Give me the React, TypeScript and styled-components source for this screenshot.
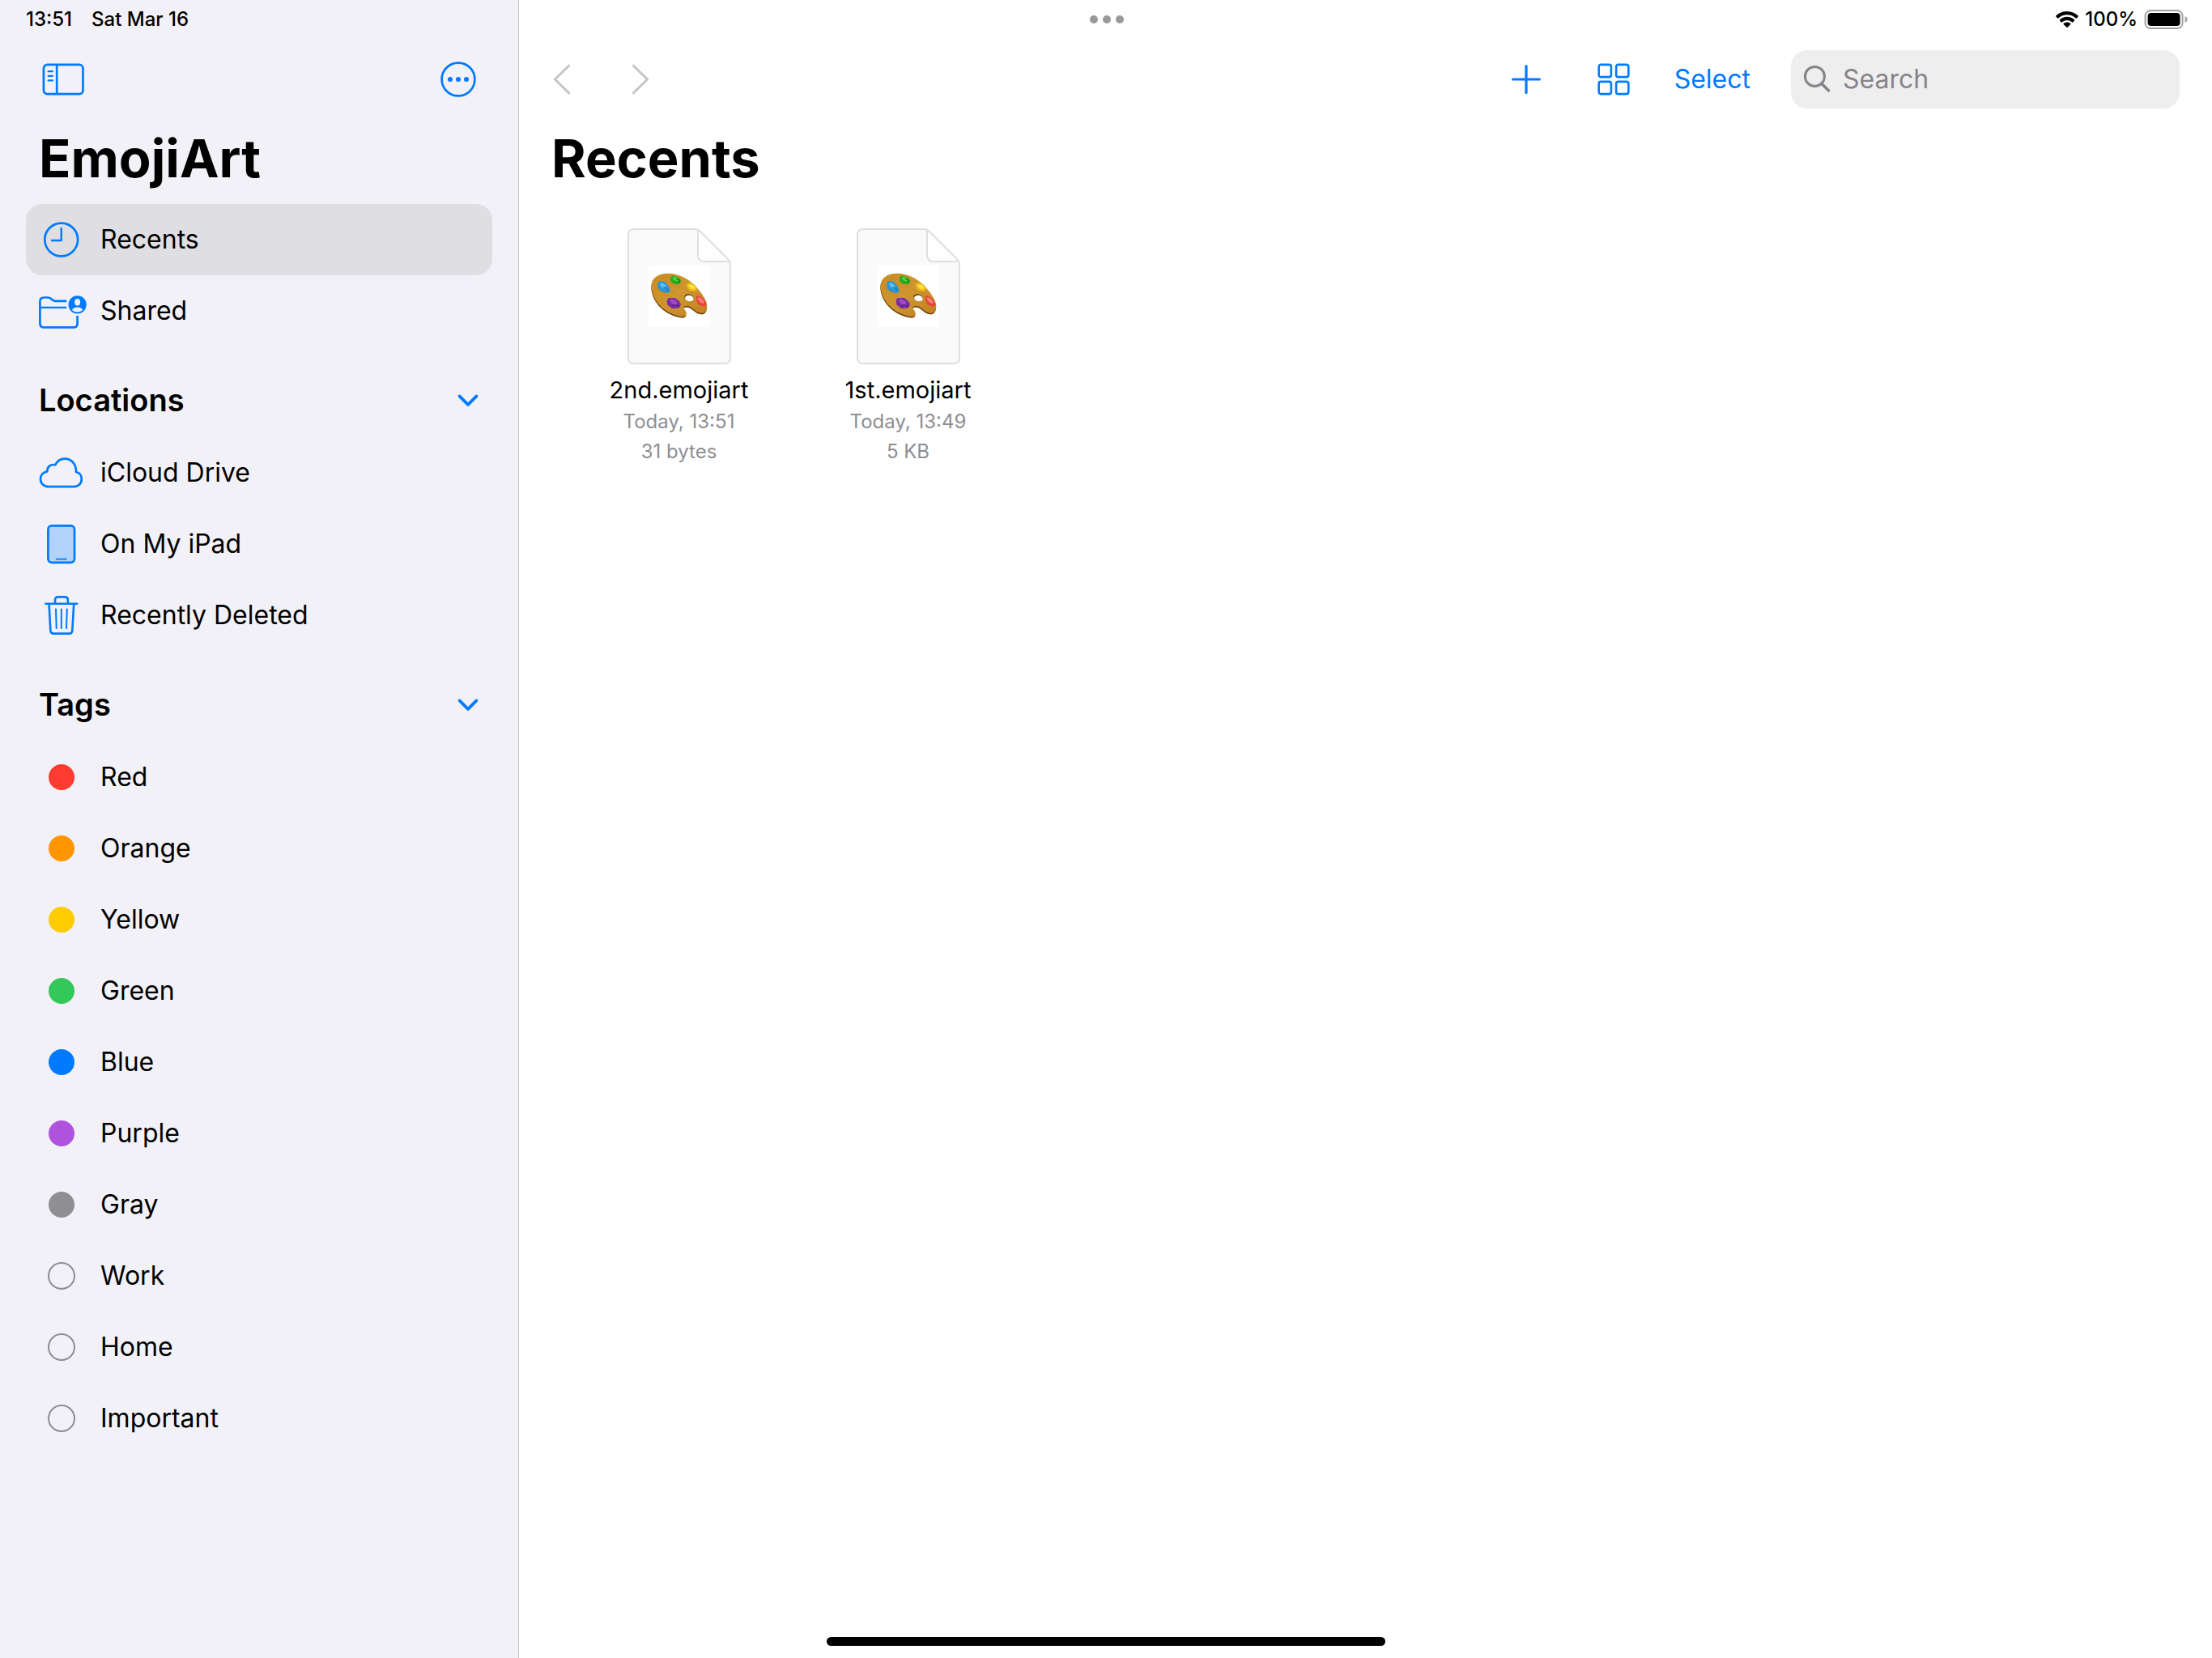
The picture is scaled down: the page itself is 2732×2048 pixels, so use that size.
import React from 'react';
import styled, { createGlobalStyle } from 'styled-components';

const blue = '#007aff';
const gray = '#8e8e93';

const GlobalStyle = createGlobalStyle`
  *, *::before, *::after { box-sizing: border-box; }
  body {
    margin: 0;
    background: #ffffff;
    color: #000000;
    font-family: Inter, "Liberation Sans", sans-serif;
  }
`;

const Screen = styled.div`
  position: relative;
  display: flex;
  min-height: 100vh;
`;

const StatusBar = styled.header`
  position: absolute;
  top: 0;
  left: 0;
  right: 0;
  display: grid;
  grid-template-columns: 1fr auto 1fr;
  align-items: center;
  height: 48px;
  padding: 0 30px 0 32px;
  font-size: 24px;
  font-weight: 500;
  line-height: 28px;
`;

const StatusGroup = styled.div<{ $end?: boolean; $gap: number }>`
  display: flex;
  align-items: center;
  justify-content: ${(p) => (p.$end ? 'flex-end' : 'flex-start')};
  gap: ${(p) => p.$gap}px;
`;

const MultitaskButton = styled.button`
  display: flex;
  gap: 6px;
  padding: 0;
  border: 0;
  background: none;
`;

const MultitaskDot = styled.span`
  width: 10px;
  height: 10px;
  border-radius: 50%;
  background: #999999;
`;

const Sidebar = styled.aside`
  flex: 0 0 641px;
  padding: 62px 32px 0;
  background: #f2f1f7;
  border-right: 1px solid #c3c3c7;
`;

const Content = styled.main`
  flex: 1;
  min-width: 0;
  padding: 62px 40px 0;
`;

const Bar = styled.div<{ $inset?: boolean }>`
  display: flex;
  align-items: center;
  height: 72px;
  padding: ${(p) => (p.$inset ? '0 20px' : '0')};
`;

const Spacer = styled.div`
  flex: 1;
`;

const IconButton = styled.button<{ $color?: string; $wide?: boolean }>`
  display: flex;
  align-items: center;
  justify-content: center;
  width: ${(p) => (p.$wide ? '66px' : 'auto')};
  padding: 0;
  border: 0;
  background: none;
  color: ${(p) => p.$color ?? blue};
`;

const Title = styled.h1<{ $indent: number }>`
  margin: 18px 0 12px;
  padding-left: ${(p) => p.$indent}px;
  font-size: 65px;
  font-weight: 700;
  line-height: 88px;
`;

const List = styled.ul`
  margin: 0;
  padding: 0;
  list-style: none;
`;

const RowLink = styled.a<{ $selected?: boolean }>`
  display: flex;
  align-items: center;
  gap: 20px;
  height: 88px;
  padding: 0 16px;
  border-radius: 20px;
  background: ${(p) => (p.$selected ? '#dfdee3' : 'transparent')};
  color: inherit;
  font-size: 32px;
  line-height: 44px;
  text-decoration: none;
`;

const IconSlot = styled.span`
  display: flex;
  align-items: center;
  justify-content: center;
  flex: 0 0 56px;
  height: 56px;
  color: ${blue};

  svg { overflow: visible; }
`;

const TagDot = styled.span<{ $color?: string }>`
  width: ${(p) => (p.$color ? 32 : 34)}px;
  height: ${(p) => (p.$color ? 32 : 34)}px;
  border: ${(p) => (p.$color ? 'none' : `2px solid ${gray}`)};
  border-radius: 50%;
  background: ${(p) => p.$color ?? 'transparent'};
`;

const SectionHeader = styled.div`
  display: flex;
  align-items: center;
  justify-content: space-between;
  height: 112px;
  padding: 20px 16px 0;
`;

const SectionTitle = styled.h2`
  margin: 0;
  font-size: 38px;
  font-weight: 600;
  line-height: 48px;
`;

const Actions = styled.div`
  display: flex;
  align-items: center;
  gap: 42px;
`;

const SelectButton = styled.button`
  padding: 0;
  border: 0;
  background: none;
  color: ${blue};
  font: inherit;
  font-size: 32px;
  line-height: 44px;
`;

const SearchField = styled.label`
  display: flex;
  align-items: center;
  gap: 14px;
  width: 480px;
  height: 72px;
  padding: 0 14px;
  border-radius: 20px;
  background: #eeeeef;
  color: #858589;
`;

const SearchInput = styled.input`
  flex: 1;
  min-width: 0;
  padding: 0;
  border: 0;
  outline: 0;
  background: none;
  color: #000000;
  font: inherit;
  font-size: 32px;
  line-height: 44px;

  &::placeholder { color: #858589; opacity: 1; }
`;

const FileGrid = styled.ul`
  display: grid;
  grid-template-columns: repeat(auto-fill, 283px);
  margin: 0;
  padding: 30px 0 0 16px;
  list-style: none;
`;

const FileCard = styled.li`
  display: flex;
  flex-direction: column;
  align-items: center;
`;

const FileName = styled.span`
  margin-top: 12px;
  font-size: 29px;
  line-height: 40px;
`;

const FileMeta = styled.span`
  color: ${gray};
  font-size: 24px;
  line-height: 37px;
`;

const HomeIndicator = styled.div`
  position: absolute;
  bottom: 15px;
  left: 50%;
  width: 690px;
  height: 11px;
  margin-left: -345px;
  border-radius: 6px;
  background: #000000;
`;

const stroke = {
  fill: 'none',
  stroke: 'currentColor',
  strokeWidth: 2.7,
  strokeLinecap: 'round' as const,
  strokeLinejoin: 'round' as const,
};

const SidebarIcon = () => (
  <svg width="52" height="40" viewBox="0 0 52 40" {...stroke} aria-hidden="true">
    <rect x="1.9" y="1.9" width="48.6" height="36.2" rx="4.6" />
    <path d="M18.2 1.9V38.1" strokeLinecap="butt" />
    <path d="M7.6 10.2H13M7.6 15.8H13M7.6 21.4H13" strokeWidth="2.2" />
  </svg>
);

const MoreIcon = () => (
  <svg width="44" height="44" viewBox="0 0 44 44" {...stroke} aria-hidden="true">
    <circle cx="22" cy="22" r="20.4" />
    <g fill="currentColor" stroke="none">
      <circle cx="12" cy="22" r="3" />
      <circle cx="22" cy="22" r="3" />
      <circle cx="32" cy="22" r="3" />
    </g>
  </svg>
);

const ClockIcon = () => (
  <svg width="56" height="56" viewBox="0 0 56 56" {...stroke} aria-hidden="true">
    <circle cx="27.7" cy="28" r="20.4" />
    <path d="M27.7 14V29H16" strokeWidth="2.4" />
  </svg>
);

const SharedIcon = () => (
  <svg width="56" height="56" viewBox="0 0 56 56" {...stroke} aria-hidden="true">
    <path
      strokeLinecap="butt"
      d="M34.3 15.9H20.5q-2.2 0-3.8-1.4l-1.6-1.4q-1.8-1.6-4.2-1.6H6.4q-5 0-5 5V43.4q0 5 5 5H42.6q5 0 5-5V34"
    />
    <path strokeLinecap="butt" strokeWidth="2.4" d="M1.4 23.9H34.3" />
    <circle cx="47.6" cy="20.3" r="11.1" fill="currentColor" stroke="none" />
    <g fill="#f2f1f7" stroke="none">
      <ellipse cx="47.6" cy="17.2" rx="3.5" ry="4.3" />
      <path d="M41 26.7C42.2 24.4 44.6 23.4 47.6 23.4S53 24.4 54.2 26.7C52.4 28.5 50.2 29.4 47.6 29.4S42.8 28.5 41 26.7Z" />
    </g>
  </svg>
);

const CloudIcon = () => (
  <svg width="56" height="56" viewBox="0 0 56 56" {...stroke} aria-hidden="true">
    <path d="M12.5 45.2C6 45.2 2 41 2 35.8 2 30.6 5.5 27 10.3 26.3 10.2 20.6 14.4 16.9 20.2 18.3 22.5 13.8 26.8 10.6 32 10.6 40.2 10.6 46.2 17.2 46 27 50.4 28 52.8 31.6 52.8 36 52.8 41.3 48.6 45.2 43.2 45.2Z" />
  </svg>
);

const IpadIcon = () => (
  <svg width="56" height="56" viewBox="0 0 56 56" {...stroke} aria-hidden="true">
    <rect x="11.4" y="5.4" width="32.6" height="45.4" rx="4.5" fill="#b3d3fa" />
    <path d="M21.6 46.6H33.8" strokeWidth="1.8" />
  </svg>
);

const TrashIcon = () => (
  <svg width="56" height="56" viewBox="0 0 56 56" {...stroke} aria-hidden="true">
    <path d="M8.4 13.8H47.2M20 13.4V9q0-3.6 3.6-3.6h8.6q3.6 0 3.6 3.6v4.4" strokeWidth="2.6" />
    <path d="M12.6 14.2 14.3 46.6q.2 4 4.2 4H37.1q4 0 4.2-4L43.2 14.2" strokeWidth="2.6" />
    <path d="M21 20.4 21.7 44M27.8 20.4V44M34.8 20.4 34 44" strokeWidth="2" />
  </svg>
);

const DisclosureIcon = () => (
  <svg width="28" height="20" viewBox="0 0 28 20" {...stroke} strokeWidth="3.8" aria-hidden="true">
    <path d="M3.6 5.400 14 15.800 24.400 5.400" />
  </svg>
);

const ChevronIcon = ({ forward }: { forward?: boolean }) => (
  <svg width="22" height="38" viewBox="0 0 22 38" {...stroke} strokeWidth="3" aria-hidden="true">
    <path d={forward ? 'M2.4 2.2 19.6 19 2.4 35.8' : 'M19.6 2.2 2.4 19 19.6 35.8'} />
  </svg>
);

const PlusIcon = () => (
  <svg width="36" height="36" viewBox="0 0 36 36" {...stroke} strokeWidth="3.2" aria-hidden="true">
    <path d="M18 1.6V34.4M1.6 18H34.4" />
  </svg>
);

const GridIcon = () => (
  <svg width="40" height="40" viewBox="0 0 40 40" {...stroke} strokeWidth="2.6" aria-hidden="true">
    <rect x="1.7" y="1.9" width="15.2" height="15.2" rx="2.4" />
    <rect x="23.1" y="1.9" width="15.2" height="15.2" rx="2.4" />
    <rect x="1.7" y="22.9" width="15.2" height="15.2" rx="2.4" />
    <rect x="23.1" y="22.9" width="15.2" height="15.2" rx="2.4" />
  </svg>
);

const SearchIcon = () => (
  <svg width="36" height="36" viewBox="0 0 36 36" {...stroke} strokeWidth="3" aria-hidden="true">
    <circle cx="15.4" cy="14.4" r="12" />
    <path d="M24 23.4 32.4 31.8" strokeWidth="3.6" />
  </svg>
);

const WifiIcon = () => (
  <svg width="28" height="20" viewBox="0 0 28 20" fill="currentColor" aria-hidden="true">
    <path d="M14 0C19.300 0 24.200 2.100 27.700 5.500q.5.500 0 1L25.800 8.400q-.5.500-1 0C21.900 5.700 18.100 4.200 14 4.200S6.100 5.700 3.200 8.400q-.5.500-1 0L.3 6.500q-.5-.5 0-1C3.800 2.100 8.700 0 14 0Z" />
    <path d="M14 6.800c3.500 0 6.700 1.300 9.100 3.600q.5.500 0 1l-2 2q-.5.500-1 0C18.500 11.900 16.400 11 14 11s-4.500.9-6.100 2.400q-.5.500-1 0l-2-2q-.5-.5 0-1C7.300 8.100 10.500 6.800 14 6.800Z" />
    <path d="M14 13.400c1.700 0 3.200.6 4.400 1.700q.5.500 0 1l-3.900 3.700q-.5.500-1 0L9.600 16.100q-.5-.5 0-1c1.200-1.100 2.700-1.700 4.400-1.700Z" />
  </svg>
);

const BatteryIcon = () => (
  <svg width="54" height="24" viewBox="0 0 54 24" aria-hidden="true">
    <rect x="1.600" y="1" width="46" height="22" rx="6.500" fill="none" stroke="#a2a2a2" strokeWidth="2" />
    <rect x="4.600" y="4" width="40" height="16" rx="4" fill="#000000" />
    <path d="M50.600 8c1.800.7 3 2.200 3 4s-1.200 3.300-3 4Z" fill="#a2a2a2" />
  </svg>
);

const DocumentIcon = () => (
  <svg width="128" height="168" viewBox="0 0 128 168" aria-hidden="true">
    <defs>
      <linearGradient id="wood" x1="0" y1="0" x2="1" y2="1">
        <stop offset="0" stopColor="#c98b22" />
        <stop offset="0.500" stopColor="#d0962f" />
        <stop offset="1" stopColor="#bf7f1f" />
      </linearGradient>
    </defs>
    <path
      d="M8 1H83q4 0 7 3L124 38q3 3 3 7V160q0 7-7 7H8q-7 0-7-7V8q0-7 7-7Z"
      fill="#fafafa"
      stroke="#dfdfdf"
      strokeWidth="2"
    />
    <path d="M87 3V33q0 8 8 8h30" fill="#fefefe" stroke="#dfdfdf" strokeWidth="2" />
    <svg x="26" y="46" width="76" height="76" viewBox="63 55 228 228">
      <rect x="63" y="55" width="228" height="228" fill="#ffffff" />
      <path
        transform="translate(-1 5)"
        fill="#74480f"
        d="M74 128C75 101 99 84 135 84 178 84 222 108 249 145 267 166 281 190 280 209 279 224 270 233 257 231 244 230 232 218 219 209 211 204 198 204 193 209 190 213 201 220 203 231 204 243 196 246 180 243 151 238 119 220 100 197 83 176 73 151 74 128Z"
      />
      <path
        fill="url(#wood)"
        d="M74 128C75 101 99 84 135 84 178 84 222 108 249 145 267 166 281 190 280 209 279 224 270 233 257 231 244 230 232 218 219 209 211 204 198 204 193 209 190 213 201 220 203 231 204 243 196 246 180 243 151 238 119 220 100 197 83 176 73 151 74 128Z"
      />
      <g fill="none" stroke="#a86f17" strokeWidth="2" opacity="0.350">
        <path d="M84 130C110 160 140 165 190 205M108 97C140 128 190 135 250 170M98 178C130 220 165 228 192 238M145 148 185 174" />
      </g>
      <path d="M196 172C196 181 207 188 217 188 225 188 230 183 230 177 230 168 220 161 210 161 202 161 196 165 196 172Z" fill="#5d390b" />
      <path d="M198 176C198 182 207 188 217 188 225 188 230 184 230 178 230 171 221 165 212 165 204 165 198 169 198 176Z" fill="#ffffff" />
      <path d="M96 126C98 114 105 110 113 113 127 116 133 125 138 133 144 141 144 153 137 156 129 159 121 155 112 151 102 147 96 135 96 126Z" fill="#2c95d3" />
      <path d="M104 123C115 113 124 126 130 134 124 146 111 139 104 123Z" fill="#5bbdf0" />
      <path d="M118 137Q130 134 136 149" fill="none" stroke="#1973ad" strokeWidth="4" />
      <path d="M144 107C143 97 149 92 159 94 171 96 180 102 183 111 184 120 175 126 164 124 151 122 144 115 144 107Z" fill="#22aa1e" />
      <path d="M152 101C162 93 175 102 176 109 170 118 157 112 152 101Z" fill="#55d943" />
      <path d="M165 105Q179 105 177 117" fill="none" stroke="#0e7e12" strokeWidth="4" />
      <path d="M204 128C203 120 211 118 220 121 232 123 242 131 242 141 241 150 231 152 219 149 207 145 209 136 204 128Z" fill="#edbd18" />
      <path d="M211 128C223 121 234 130 236 139 227 146 216 141 211 128Z" fill="#ffe04d" />
      <path d="M238 173C240 165 249 167 258 173 269 179 278 191 277 199 275 208 265 207 256 204 245 201 241 188 238 173Z" fill="#e6473c" />
      <path d="M244 174C256 172 267 184 270 193 261 199 250 189 244 174Z" fill="#ff8177" />
      <path d="M131 190C130 179 137 173 148 176 154 173 165 174 170 182 182 190 186 202 179 208 177 216 165 211 160 215 149 216 143 210 140 205 131 203 134 196 131 190Z" fill="#7b2da8" />
      <path d="M141 183C152 174 165 184 170 195 160 206 147 198 141 183Z" fill="#9c4aca" />
      <path d="M148 205Q163 198 176 206" fill="none" stroke="#5a1b83" strokeWidth="4" />
    </svg>
  </svg>
);

const locations = [
  { name: 'iCloud Drive', icon: <CloudIcon /> },
  { name: 'On My iPad', icon: <IpadIcon /> },
  { name: 'Recently Deleted', icon: <TrashIcon /> },
];

const tags: { name: string; color?: string }[] = [
  { name: 'Red', color: '#ff3b30' },
  { name: 'Orange', color: '#ff9500' },
  { name: 'Yellow', color: '#ffcc00' },
  { name: 'Green', color: '#34c759' },
  { name: 'Blue', color: '#007aff' },
  { name: 'Purple', color: '#af52de' },
  { name: 'Gray', color: gray },
  { name: 'Work' },
  { name: 'Home' },
  { name: 'Important' },
];

const files = [
  { name: '2nd.emojiart', date: 'Today, 13:51', size: '31 bytes' },
  { name: '1st.emojiart', date: 'Today, 13:49', size: '5 KB' },
];

interface RowProps {
  label: string;
  selected?: boolean;
  children: React.ReactNode;
}

const Row = ({ label, selected, children }: RowProps) => (
  <li>
    <RowLink href="#" $selected={selected} aria-current={selected ? 'page' : undefined}>
      <IconSlot>{children}</IconSlot>
      <span>{label}</span>
    </RowLink>
  </li>
);

const Section = ({ title, children }: { title: string; children: React.ReactNode }) => (
  <section>
    <SectionHeader>
      <SectionTitle>{title}</SectionTitle>
      <IconButton aria-label={`Collapse ${title}`} aria-expanded="true">
        <DisclosureIcon />
      </IconButton>
    </SectionHeader>
    <List>{children}</List>
  </section>
);

const NavButtons = styled.div`
  display: flex;
  gap: 75px;
  padding-left: 2px;
`;

const SearchSlot = styled.div`
  margin-left: 50px;
`;

export default function App() {
  return (
    <>
      <GlobalStyle />
      <Screen>
        <Sidebar>
          <Bar $inset>
            <IconButton aria-label="Hide sidebar">
              <SidebarIcon />
            </IconButton>
            <Spacer />
            <IconButton aria-label="More">
              <MoreIcon />
            </IconButton>
          </Bar>
          <Title $indent={16}>EmojiArt</Title>
          <nav aria-label="Browse">
            <List>
              <Row label="Recents" selected>
                <ClockIcon />
              </Row>
              <Row label="Shared">
                <SharedIcon />
              </Row>
            </List>
            <Section title="Locations">
              {locations.map((l) => (
                <Row key={l.name} label={l.name}>
                  {l.icon}
                </Row>
              ))}
            </Section>
            <Section title="Tags">
              {tags.map((t) => (
                <Row key={t.name} label={t.name}>
                  <TagDot $color={t.color} />
                </Row>
              ))}
            </Section>
          </nav>
        </Sidebar>

        <Content>
          <Bar>
            <NavButtons>
              <IconButton $color="#c4c4c4" aria-label="Back">
                <ChevronIcon />
              </IconButton>
              <IconButton $color="#c4c4c4" aria-label="Forward">
                <ChevronIcon forward />
              </IconButton>
            </NavButtons>
            <Spacer />
            <Actions>
              <IconButton $wide aria-label="New document">
                <PlusIcon />
              </IconButton>
              <IconButton $wide aria-label="View options">
                <GridIcon />
              </IconButton>
              <SelectButton>Select</SelectButton>
            </Actions>
            <SearchSlot>
              <SearchField>
                <SearchIcon />
                <SearchInput type="text" placeholder="Search" aria-label="Search" />
              </SearchField>
            </SearchSlot>
          </Bar>
          <Title as="h2" $indent={0}>Recents</Title>
          <FileGrid>
            {files.map((f) => (
              <FileCard key={f.name}>
                <DocumentIcon />
                <FileName>{f.name}</FileName>
                <FileMeta>{f.date}</FileMeta>
                <FileMeta>{f.size}</FileMeta>
              </FileCard>
            ))}
          </FileGrid>
        </Content>

        <StatusBar>
          <StatusGroup $gap={24}>
            <span>13:51</span>
            <span>Sat Mar 16</span>
          </StatusGroup>
          <MultitaskButton aria-label="Multitasking">
            <MultitaskDot />
            <MultitaskDot />
            <MultitaskDot />
          </MultitaskButton>
          <StatusGroup $end $gap={8}>
            <WifiIcon />
            <span>100%</span>
            <BatteryIcon />
          </StatusGroup>
        </StatusBar>
        <HomeIndicator />
      </Screen>
    </>
  );
}
